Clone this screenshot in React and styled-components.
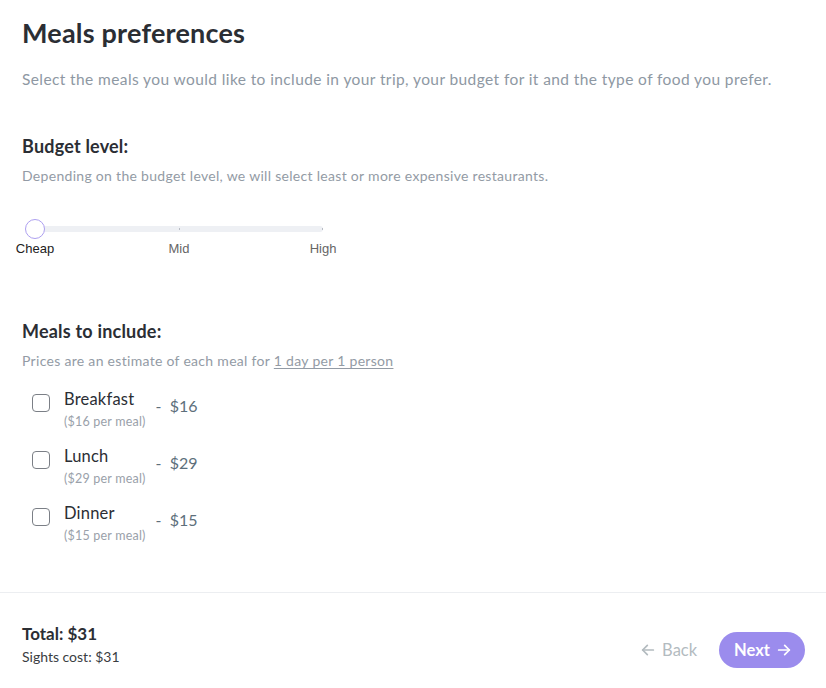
import React from 'react';
import styled, { createGlobalStyle } from 'styled-components';

const GlobalStyle = createGlobalStyle`
  html, body {
    margin: 0;
    padding: 0;
    background: #ffffff;
  }
  body {
    font-family: Lato, "Noto Sans", sans-serif;
    color: #2b2e34;
  }
`;

const Page = styled.div`
  width: 826px;
  height: 688px;
  display: flex;
  flex-direction: column;
  overflow: hidden;
`;

const Content = styled.main`
  flex: 1;
  padding: 15px 22px 0;
`;

const Title = styled.h1`
  margin: 0;
  font-size: 27px;
  line-height: 36px;
  font-weight: 700;
  color: #2b2e34;
  letter-spacing: 0.2px;
`;

const Lead = styled.p`
  margin: 18px 0 0;
  font-size: 15.5px;
  line-height: 20px;
  color: #8e98a3;
  letter-spacing: 0.4px;
`;

const Section = styled.section`
  margin-top: ${(p) => p.$top}px;
`;

const SectionTitle = styled.h2`
  margin: 0;
  font-size: 18px;
  line-height: 22px;
  font-weight: 700;
  color: #2b2e34;
  letter-spacing: 0.2px;
`;

const SectionHint = styled.p`
  margin: 10px 0 0;
  font-size: 14px;
  line-height: 18px;
  color: #939ba5;
  letter-spacing: 0.3px;

  u {
    text-underline-offset: 2px;
  }
`;

const Slider = styled.div`
  margin: 41px 0 0 13px;
  width: 288px;
`;

const Track = styled.div`
  position: relative;
  height: 6px;
  border-radius: 3px;
  background: #eef0f4;
`;

const Tick = styled.span`
  position: absolute;
  top: 2px;
  width: 1px;
  height: 2px;
  background: #b8bcc4;
  left: ${(p) => p.$at}%;
`;

const Thumb = styled.span`
  position: absolute;
  left: -10px;
  top: -7px;
  width: 20px;
  height: 20px;
  box-sizing: border-box;
  border-radius: 50%;
  background: #ffffff;
  border: 1px solid #ad9ff0;
`;

const Marks = styled.div`
  display: flex;
  gap: 84px;
  margin: 9px 0 0 -30px;
`;

const Mark = styled.span`
  flex: 0 0 60px;
  text-align: center;
  font-family: "Liberation Sans", Arial, sans-serif;
  font-size: 13px;
  line-height: 16px;
  color: ${(p) => (p.$active ? '#222' : '#666')};
`;

const MealList = styled.div`
  display: flex;
  flex-direction: column;
  gap: 16px;
  margin-top: 19px;
  padding-left: 10px;
`;

const MealRow = styled.label`
  display: flex;
  align-items: flex-start;
`;

const Box = styled.span`
  width: 18px;
  height: 18px;
  box-sizing: border-box;
  border: 1.5px solid #7b7f86;
  border-radius: 4px;
  margin-top: 5px;
  margin-right: 14px;
  flex-shrink: 0;
`;

const MealText = styled.div`
  display: flex;
  flex-direction: column;
`;

const MealName = styled.span`
  font-size: 16.5px;
  line-height: 20px;
  color: #2b2e34;
  letter-spacing: 0.2px;
`;

const MealSub = styled.span`
  margin-top: 5px;
  font-size: 12.5px;
  line-height: 16px;
  color: #9aa1aa;
  letter-spacing: 0.2px;
`;

const MealPrice = styled.span`
  margin: 7px 0 0 10px;
  font-size: 16px;
  line-height: 20px;
  color: #5d6f7b;
  white-space: pre;
`;

const Footer = styled.footer`
  height: 96px;
  box-sizing: border-box;
  border-top: 1px solid #eceef1;
  display: flex;
  align-items: center;
  justify-content: space-between;
  padding: 8px 21px 0 22px;
`;

const Totals = styled.div`
  display: flex;
  flex-direction: column;
  gap: 4px;
`;

const Total = styled.span`
  font-size: 17px;
  line-height: 20px;
  font-weight: 700;
  color: #2b2e34;
`;

const Cost = styled.span`
  font-size: 14px;
  line-height: 17px;
  color: #3a3d42;
`;

const Actions = styled.div`
  display: flex;
  align-items: center;
  gap: 22px;
  margin-top: 10px;
`;

const BackButton = styled.button`
  display: flex;
  align-items: center;
  gap: 6px;
  border: none;
  background: none;
  padding: 0;
  font-family: inherit;
  font-size: 16.5px;
  color: #b3bbbf;
  cursor: pointer;
`;

const NextButton = styled.button`
  display: flex;
  align-items: center;
  gap: 6px;
  height: 36px;
  padding: 0 13px 0 15px;
  border: none;
  border-radius: 18px;
  background: #9b8ced;
  color: #ffffff;
  font-family: inherit;
  font-size: 16.5px;
  font-weight: 700;
  cursor: pointer;
`;

const Arrow = ({ dir = 'right', color }) => (
  <svg width="16" height="16" viewBox="0 0 24 24" fill="none" stroke={color} strokeWidth="2.6" strokeLinecap="round" strokeLinejoin="round">
    {dir === 'right' ? (
      <>
        <path d="M4 12h16" />
        <path d="M13 5l7 7-7 7" />
      </>
    ) : (
      <>
        <path d="M20 12H4" />
        <path d="M11 5l-7 7 7 7" />
      </>
    )}
  </svg>
);

const meals = [
  { name: 'Breakfast', price: 16 },
  { name: 'Lunch', price: 29 },
  { name: 'Dinner', price: 15 },
];

export default function App() {
  return (
    <Page>
      <GlobalStyle />
      <Content>
        <Title>Meals preferences</Title>
        <Lead>
          Select the meals you would like to include in your trip, your budget for it and the type of food you prefer.
        </Lead>

        <Section $top={46}>
          <SectionTitle>Budget level:</SectionTitle>
          <SectionHint>Depending on the budget level, we will select least or more expensive restaurants.</SectionHint>
          <Slider>
            <Track>
              <Tick $at={50} />
              <Tick $at={99.6} />
              <Thumb />
            </Track>
            <Marks>
              <Mark $active>Cheap</Mark>
              <Mark>Mid</Mark>
              <Mark>High</Mark>
            </Marks>
          </Slider>
        </Section>

        <Section $top={63}>
          <SectionTitle>Meals to include:</SectionTitle>
          <SectionHint>
            Prices are an estimate of each meal for <u>1 day per 1 person</u>
          </SectionHint>
          <MealList>
            {meals.map((m) => (
              <MealRow key={m.name}>
                <Box />
                <MealText>
                  <MealName>{m.name}</MealName>
                  <MealSub>(${m.price} per meal)</MealSub>
                </MealText>
                <MealPrice>{`-  $${m.price}`}</MealPrice>
              </MealRow>
            ))}
          </MealList>
        </Section>
      </Content>

      <Footer>
        <Totals>
          <Total>Total: $31</Total>
          <Cost>Sights cost: $31</Cost>
        </Totals>
        <Actions>
          <BackButton>
            <Arrow dir="left" color="#b3bbbf" />
            Back
          </BackButton>
          <NextButton>
            Next
            <Arrow color="#ffffff" />
          </NextButton>
        </Actions>
      </Footer>
    </Page>
  );
}
